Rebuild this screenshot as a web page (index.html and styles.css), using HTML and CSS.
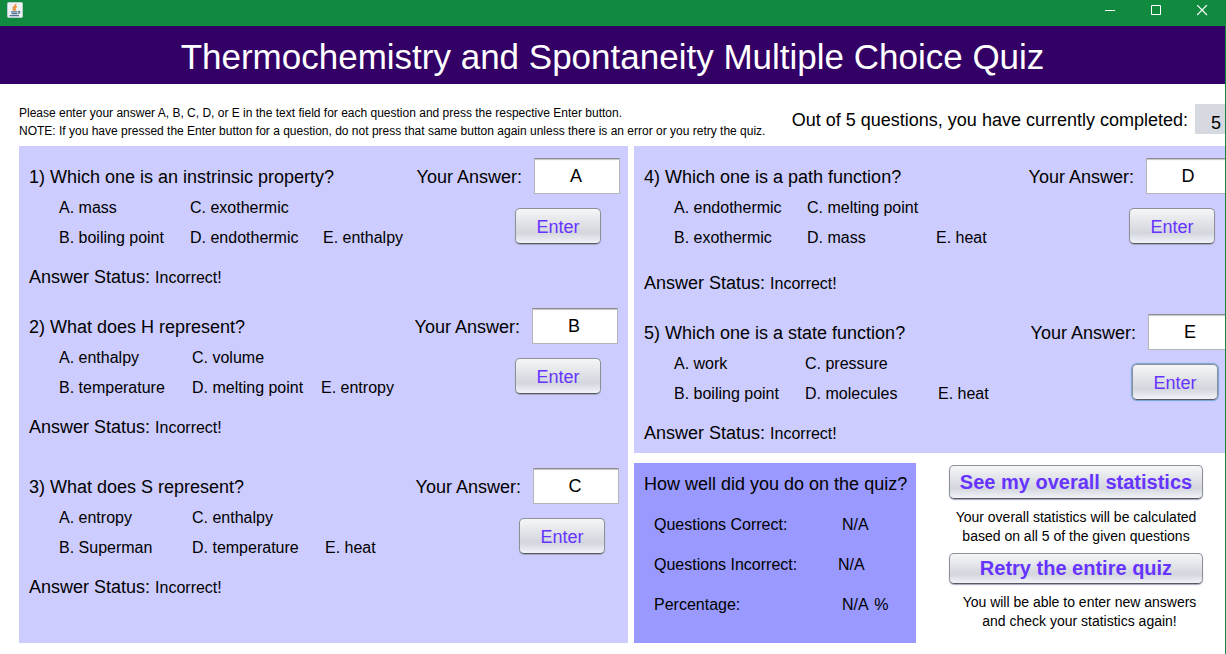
FILE: index.html
```html
<!DOCTYPE html>
<html lang="en">
<head>
<meta charset="utf-8">
<title>Thermochemistry and Spontaneity Multiple Choice Quiz</title>
<link rel="stylesheet" href="styles.css">
</head>
<body>
<div class="window">
  <div class="titlebar">
    <svg class="app-icon" width="16" height="16" viewBox="0 0 16 16" aria-hidden="true">
      <rect x=".5" y=".5" width="15" height="15" rx="1" fill="#eef1f4" stroke="#b9cdd0"/>
      <path d="M8.800 2C9.200 4 5.400 4.800 6.200 6.800L7.400 8.800M10 4.600C7.800 5.400 7.400 6.600 8.800 8.400" fill="none" stroke="#ec8a35" stroke-width="1.500"/>
      <path d="M4 9.800h6.500M4.600 11.600h5.400M11 9.300c2.800-.4 1.800 2.200-.4 2.300M2.600 13.700h9.400" fill="none" stroke="#4f7290" stroke-width="1.200"/>
    </svg>
    <div class="controls">
      <button class="control" type="button" aria-label="Minimize"><svg width="11" height="11" viewBox="0 0 11 11"><path d="M0 5.500h10" stroke="#fff"/></svg></button>
      <button class="control" type="button" aria-label="Maximize"><svg width="11" height="11" viewBox="0 0 11 11"><path d="M.5 .5h9v9h-9z" fill="none" stroke="#fff"/></svg></button>
      <button class="control" type="button" aria-label="Close"><svg width="11" height="11" viewBox="0 0 11 11"><path d="M0 0l10 10M10 0L0 10" stroke="#fff" stroke-width="1.200"/></svg></button>
    </div>
  </div>

  <h1 class="banner">Thermochemistry and Spontaneity Multiple Choice Quiz</h1>

  <div class="intro">
    <p class="notes">Please enter your answer A, B, C, D, or E in the text field for each question and press the respective Enter button.<br>NOTE: If you have pressed the Enter button for a question, do not press that same button again unless there is an error or you retry the quiz.</p>
    <p class="progress">Out of 5 questions, you have currently completed: <output class="count">5</output></p>
  </div>

  <main class="board">
    <section class="panel panel-left">
      <form class="question">
        <div class="ask">
          <h2 class="prompt">1) Which one is an instrinsic property?</h2>
          <label class="answer-label" for="a1">Your Answer:</label>
          <input class="answer" id="a1" type="text" value="A">
        </div>
        <div class="body">
          <ul class="choices choices-wide"><li>A. mass</li><li>C. exothermic</li><li class="row-start">B. boiling point</li><li>D. endothermic</li><li>E. enthalpy</li></ul>
          <button class="button enter" type="button">Enter</button>
        </div>
        <p class="status">Answer Status: <span class="verdict">Incorrect!</span></p>
      </form>
      <form class="question">
        <div class="ask ask-inset">
          <h2 class="prompt">2) What does H represent?</h2>
          <label class="answer-label" for="a2">Your Answer:</label>
          <input class="answer" id="a2" type="text" value="B">
        </div>
        <div class="body">
          <ul class="choices"><li>A. enthalpy</li><li>C. volume</li><li class="row-start">B. temperature</li><li>D. melting point</li><li>E. entropy</li></ul>
          <button class="button enter" type="button">Enter</button>
        </div>
        <p class="status">Answer Status: <span class="verdict">Incorrect!</span></p>
      </form>
      <form class="question question-last">
        <div class="ask">
          <h2 class="prompt">3) What does S represent?</h2>
          <label class="answer-label" for="a3">Your Answer:</label>
          <input class="answer" id="a3" type="text" value="C">
        </div>
        <div class="body">
          <ul class="choices choices-even"><li>A. entropy</li><li>C. enthalpy</li><li class="row-start">B. Superman</li><li>D. temperature</li><li>E. heat</li></ul>
          <button class="button enter" type="button">Enter</button>
        </div>
        <p class="status">Answer Status: <span class="verdict">Incorrect!</span></p>
      </form>
    </section>

    <div class="side">
      <section class="panel panel-right">
        <form class="question question-tall">
          <div class="ask">
            <h2 class="prompt">4) Which one is a path function?</h2>
            <label class="answer-label" for="a4">Your Answer:</label>
            <input class="answer" id="a4" type="text" value="D">
          </div>
          <div class="body">
            <ul class="choices"><li>A. endothermic</li><li>C. melting point</li><li class="row-start">B. exothermic</li><li>D. mass</li><li>E. heat</li></ul>
            <button class="button enter" type="button">Enter</button>
          </div>
          <p class="status">Answer Status: <span class="verdict">Incorrect!</span></p>
        </form>
        <form class="question">
          <div class="ask ask-outset">
            <h2 class="prompt">5) Which one is a state function?</h2>
            <label class="answer-label" for="a5">Your Answer:</label>
            <input class="answer" id="a5" type="text" value="E">
          </div>
          <div class="body body-outset">
            <ul class="choices choices-wide"><li>A. work</li><li>C. pressure</li><li class="row-start">B. boiling point</li><li>D. molecules</li><li>E. heat</li></ul>
            <button class="button enter active" type="button">Enter</button>
          </div>
          <p class="status">Answer Status: <span class="verdict">Incorrect!</span></p>
        </form>
      </section>

      <div class="summary">
        <section class="results">
          <h2 class="prompt">How well did you do on the quiz?</h2>
          <dl class="scores">
            <dt>Questions Correct:</dt><dd>N/A</dd>
            <dt>Questions Incorrect:</dt><dd class="early">N/A</dd>
            <dt>Percentage:</dt><dd>N/A <span class="unit">%</span></dd>
          </dl>
        </section>
        <div class="actions">
          <button class="button action" type="button">See my overall statistics</button>
          <p class="caption">Your overall statistics will be calculated<br>based on all 5 of the given questions</p>
          <button class="button action action-slim" type="button">Retry the entire quiz</button>
          <p class="caption caption-shift">You will be able to enter new answers<br>and check your statistics again!</p>
        </div>
      </div>
    </div>
  </main>
</div>
</body>
</html>
```
FILE: styles.css
```css
* { box-sizing: border-box; }

body {
  margin: 0;
  background: #fff;
  color: #000;
  font-family: "Liberation Sans", Arial, sans-serif;
  font-size: 16px;
  line-height: 20px;
}

h1, h2, p, ul, dl, dd { margin: 0; padding: 0; font-weight: 400; }
ul { list-style: none; }
button, input { font-family: inherit; }

.window {
  min-height: 100vh;
  border-right: 1px solid #118a3f;
  overflow: hidden;
}

.titlebar {
  display: flex;
  justify-content: space-between;
  height: 26px;
  background: #118a3f;
}
.app-icon { margin: 2px 0 0 7px; }
.controls { display: flex; }
.control {
  display: grid;
  place-items: center;
  width: 46px;
  height: 21px;
  padding: 0;
  border: 0;
  background: none;
}

.banner {
  padding: 11px 0 7px;
  background: #330066;
  color: #fff;
  font-size: 35px;
  line-height: 40px;
  text-align: center;
}

.intro {
  display: flex;
  justify-content: space-between;
  padding: 20px 0 6px 19px;
}
.notes {
  font-size: 12px;
  line-height: 18px;
  white-space: nowrap;
}
.progress {
  display: flex;
  align-items: flex-start;
  height: 36px;
  font-size: 18px;
  line-height: 32px;
  white-space: nowrap;
}
.count {
  width: 30px;
  height: 30px;
  margin-left: 7px;
  padding-left: 16px;
  background: #d6d9df;
  line-height: 38px;
}

.board {
  display: grid;
  grid-template-columns: 609fr 591fr;
  gap: 6px;
  padding: 0 0 12px 19px;
}

.panel {
  padding: 12px 0 0 10px;
  background: #ccccff;
  overflow: hidden;
}
.panel-right { padding-bottom: 9px; }

.question { margin-bottom: 20px; }
.question + .question-last { margin-top: 30px; }
.panel .question:last-child { margin-bottom: 0; }

.ask {
  display: flex;
  align-items: center;
  padding-right: 8px;
}
.ask-inset { padding-right: 10px; }
.question-last .ask { padding-right: 9px; }
.panel-right .ask { margin-right: -7px; padding-right: 0; }
.panel-right .ask-outset { margin-right: -9px; }
.prompt {
  flex: 1;
  font-size: 18px;
  line-height: 20px;
}
.answer-label {
  margin-right: 12px;
  font-size: 18px;
  line-height: 20px;
}
.ask .prompt, .answer-label { padding-top: 2px; }
.answer {
  width: 86px;
  height: 36px;
  padding: 0 2px 0 0;
  border: 1px solid #b5b5b8;
  border-top-color: #8c8c90;
  background: #fff;
  box-shadow: inset 0 2px 1px -1px #c4c4c8;
  font-size: 18px;
  text-align: center;
}

.body {
  display: flex;
  justify-content: space-between;
  align-items: flex-start;
  padding-right: 27px;
}
.question-last .body { padding-right: 23px; }
.panel-right .body { padding-right: 10px; }
.panel-right .body-outset { padding-right: 7px; }

.choices {
  display: grid;
  grid-template-columns: 133px 129px auto;
  row-gap: 10px;
  padding: 4px 0 0 30px;
}
.choices-wide { grid-template-columns: 131px 133px auto; }
.choices-even { grid-template-columns: 133px 133px auto; }
.row-start { grid-column-start: 1; }

.status {
  margin-top: 19px;
  font-size: 18px;
}
.question-tall .status { margin-top: 25px; }
.verdict { font-size: 16px; }

.button {
  border: 1px solid #8d9097;
  border-bottom-color: #555962;
  border-radius: 5px;
  background: linear-gradient(#f5f6f8, #dfe1e6 45%, #d3d6dd 70%, #f1f3f8);
  box-shadow: 0 1px 1px #a4a6bd;
  color: #6633ff;
}
.enter {
  width: 86px;
  height: 36px;
  margin-top: 14px;
  padding: 2px 0 0;
  font-size: 18px;
}
.active { box-shadow: 0 0 1px 1px #73a4d1; }

.summary {
  display: flex;
  margin-top: 10px;
}
.results {
  flex: 0 0 282px;
  min-height: 180px;
  padding: 11px 0 0 10px;
  background: #9999ff;
}
.scores {
  display: grid;
  grid-template-columns: 188px auto;
  row-gap: 20px;
  padding: 21px 0 0 10px;
}
.scores .early { margin-left: -4px; }
.unit { margin-left: 2px; }

.actions {
  display: flex;
  flex: 1;
  flex-direction: column;
  align-items: center;
  padding: 2px 0 0 11px;
}
.action {
  width: 254px;
  height: 34px;
  padding: 0;
  font-size: 20px;
  font-weight: 700;
}
.action-slim { height: 31px; }
.caption {
  margin: 9px 0 7px;
  font-size: 14px;
  line-height: 19px;
  text-align: center;
}
.caption-shift { padding-left: 7px; }
```
